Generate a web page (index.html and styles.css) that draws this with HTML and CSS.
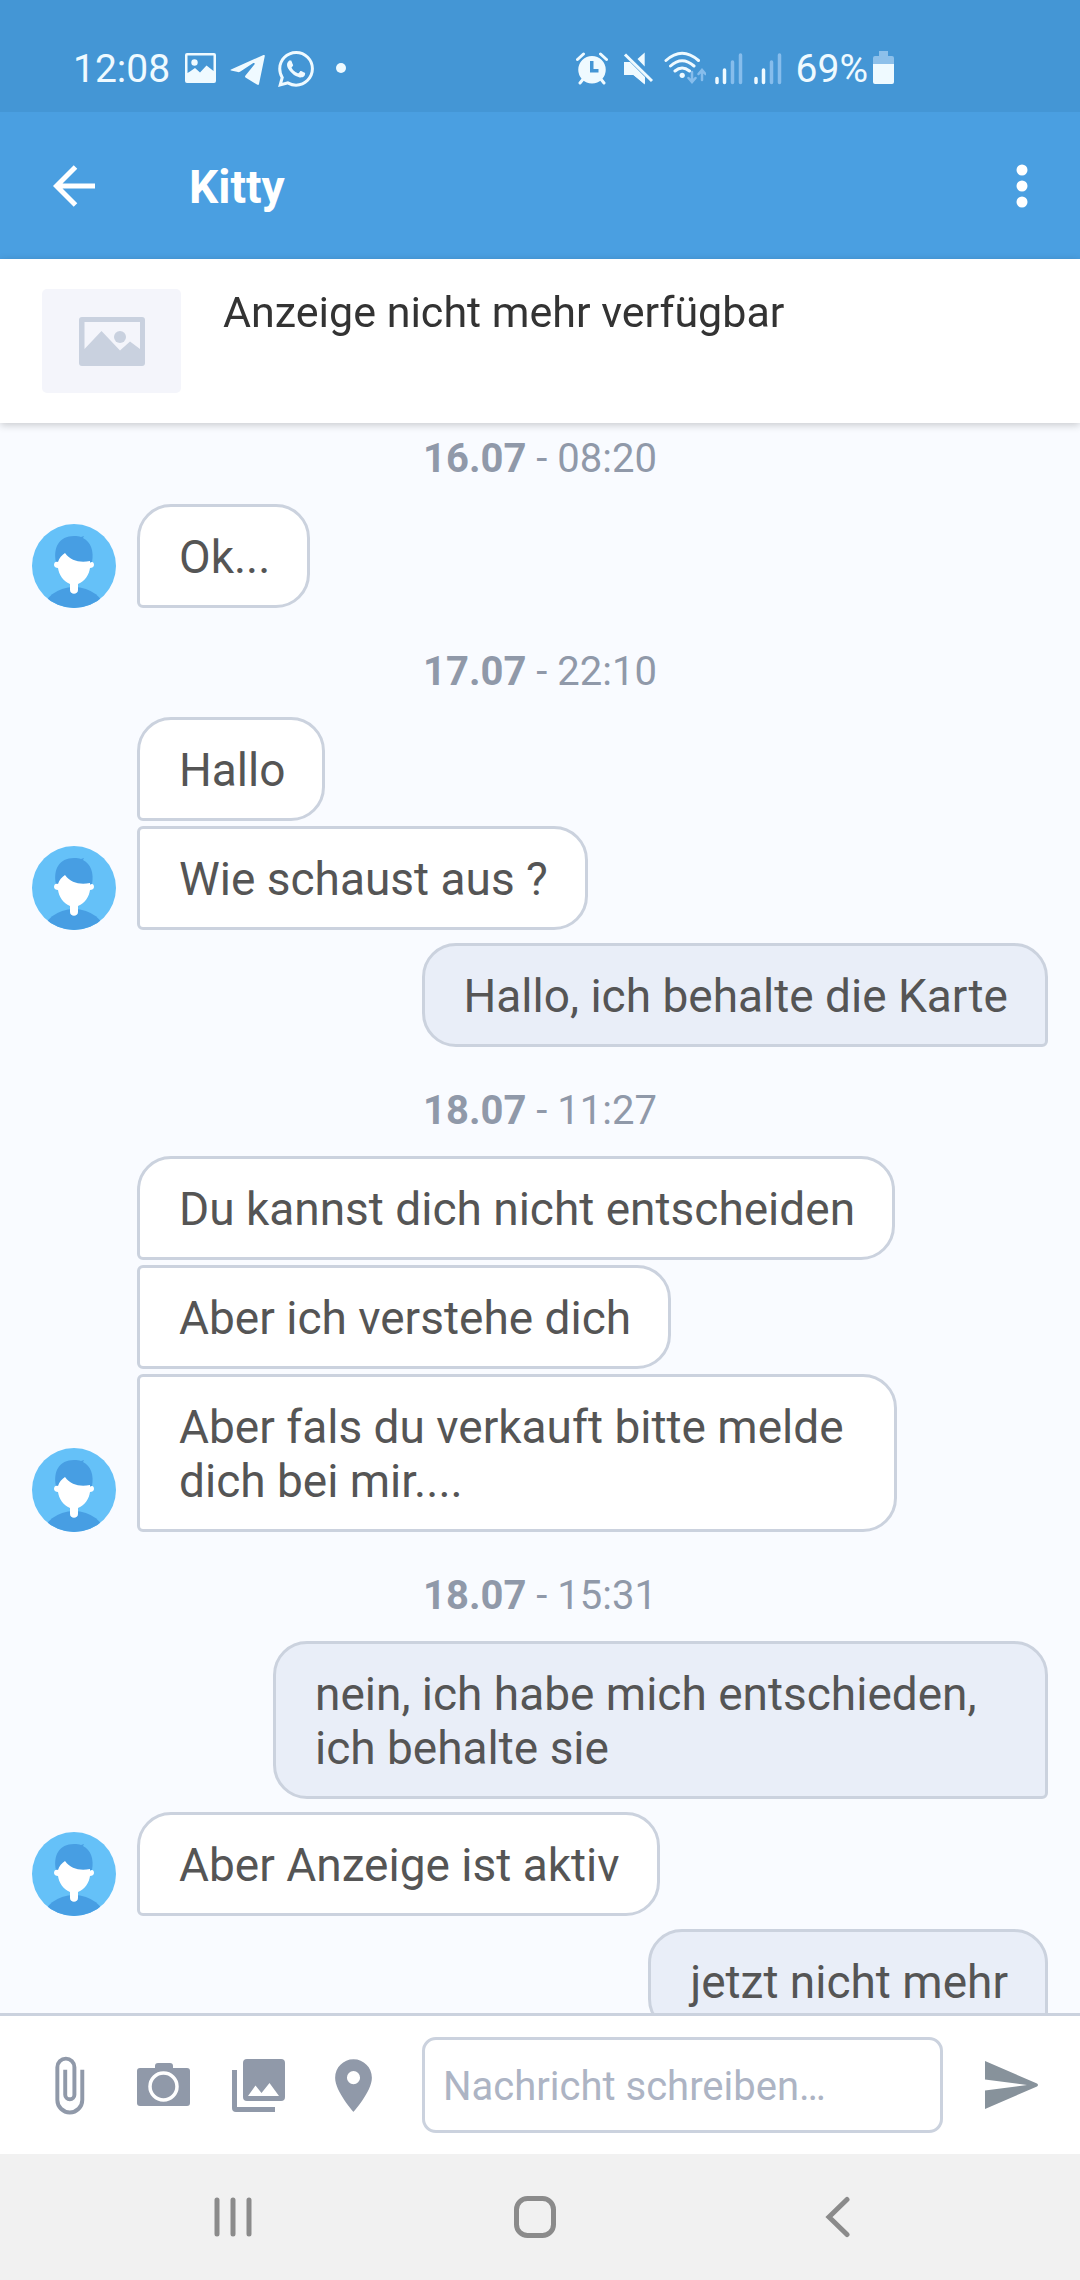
FILE: index.html
```html
<!DOCTYPE html>
<html lang="de">
<head>
<meta charset="utf-8">
<meta name="viewport" content="width=device-width, initial-scale=1">
<title>Kitty</title>
<link rel="stylesheet" href="styles.css">
</head>
<body>
<svg class="symbols" aria-hidden="true">
  <symbol id="avatar" viewBox="0 0 84 84">
    <clipPath id="avatar-clip"><circle cx="42" cy="42" r="42"/></clipPath>
    <circle cx="42" cy="42" r="42" fill="#65c1f8"/>
    <g clip-path="url(#avatar-clip)">
      <ellipse cx="42" cy="88" rx="31" ry="25" fill="#479ee3"/>
      <path d="M24 38C21 24 27 12 42 12c3 0 5 0 7 1l3-1-1 2c8 4 11 13 9 24z" fill="#479ee3"/>
      <path d="M26 38c1-4 4-7 7-9 6 8 15 10 25 8v2c2-2 4-1 4 2 0 2-2 3-4 3-1 7-5 13-12 16v6c0 5-8 5-8 0v-6c-7-3-11-9-12-16-2 0-4-1-4-3 0-3 2-4 4-3z" fill="#fff"/>
    </g>
  </symbol>
</svg>
<div class="app">
  <div class="status-bar">
    <div class="status-left">
      <span>12:08</span>
      <svg width="36" height="36" viewBox="0 0 36 36" fill="currentColor"><path fill-rule="evenodd" d="M5 2h27a2 2 0 0 1 2 2v26a2 2 0 0 1-2 2H5a2 2 0 0 1-2-2V4a2 2 0 0 1 2-2zm.5 2.500V22l2.500-1.500 5-3.500 5 4.500 6.500-7L31.500 20V4.500z"/><circle cx="12.500" cy="11.500" r="3.200"/></svg>
      <svg width="36" height="36" viewBox="0 0 36 36" fill="currentColor"><path d="M1 18.500 33.500 4q1.500-.5 1.300 1L29 33q-.5 1.500-2 .5L15.500 26.500q-1-1 0-2L24.800 13q0-1.500-1.500-1L10 20.800q-1 .6-2 .3L1 19.500q-1-.5 0-1z"/></svg>
      <svg width="36" height="36" viewBox="0 0 24 24" fill="currentColor"><path d="M17.472 14.382c-.297-.149-1.758-.867-2.030-.967-.273-.099-.471-.148-.67.15-.197.297-.767.966-.94 1.164-.173.199-.347.223-.644.075-.297-.15-1.255-.463-2.390-1.475-.883-.788-1.480-1.761-1.653-2.059-.173-.297-.018-.458.13-.606.134-.133.298-.347.446-.52.149-.174.198-.298.298-.497.099-.198.05-.371-.025-.52-.075-.149-.669-1.612-.916-2.207-.242-.579-.487-.5-.669-.51-.173-.008-.371-.01-.57-.01-.198 0-.52.074-.792.372-.272.297-1.040 1.016-1.040 2.479 0 1.462 1.065 2.875 1.213 3.074.149.198 2.096 3.200 5.077 4.487.709.306 1.262.489 1.694.625.712.227 1.360.195 1.871.118.571-.085 1.758-.719 2.006-1.413.248-.694.248-1.289.173-1.413-.074-.124-.272-.198-.57-.347m-5.421 7.403h-.004a9.870 9.870 0 0 1-5.031-1.378l-.361-.214-3.741.982.998-3.648-.235-.374a9.860 9.860 0 0 1-1.510-5.260c.001-5.450 4.436-9.884 9.888-9.884 2.640 0 5.122 1.030 6.988 2.898a9.825 9.825 0 0 1 2.893 6.994c-.003 5.450-4.437 9.884-9.885 9.884m8.413-18.297A11.815 11.815 0 0 0 12.050 0C5.495 0 .16 5.335.157 11.892c0 2.096.547 4.142 1.588 5.945L.057 24l6.305-1.654a11.882 11.882 0 0 0 5.683 1.448h.005c6.554 0 11.890-5.335 11.893-11.893a11.821 11.821 0 0 0-3.480-8.413z"/></svg>
      <svg width="30" height="36" viewBox="0 0 30 36" fill="currentColor"><circle cx="15" cy="17" r="5"/></svg>
    </div>
    <div class="status-right">
      <svg width="36" height="36" viewBox="0 0 36 36" fill="none" stroke="currentColor" stroke-width="4"><path fill="currentColor" stroke="none" fill-rule="evenodd" d="M16 5a13.500 13.500 0 1 1 0 27.500A13.500 13.500 0 1 1 16 5zm-2 5v11.500h8.500V18h-5v-8z"/><path d="m1.500 8.500 6-5.500M24.500 3l6 5.500M4 32l4-5M28 32l-4-5" stroke-linecap="round" stroke-width="3"/></svg>
      <svg width="36" height="36" viewBox="0 0 36 36" fill="currentColor"><path d="M24.700 1.500v14L17.500 8zM4 11h5l15.700 16v6.500L13.500 24H4z"/><path d="M4 11h6l15 15v7L13.500 24H4z"/><path d="m5 3.500 27 26.500" stroke="currentColor" stroke-width="3"/></svg>
      <svg width="42" height="36" viewBox="0 0 42 36" fill="none" stroke="currentColor" stroke-width="3" stroke-linecap="round"><path d="M2 9.500q16-14.500 32.500 0M6.500 15q11.500-10.500 23.500 0M11 20q7-6 14.500 0"/><circle cx="18.200" cy="24.300" r="2.600" fill="currentColor" stroke="none"/><g stroke="#86bdec" stroke-width="2.500"><path d="M28 21v9m-3.500-3 3.500 4 3.500-4M38 29v-9m-3.500 3 3.500-4 3.500 4"/></g></svg>
      <svg width="74" height="36" viewBox="0 0 74 36" stroke-width="3.500" stroke-linecap="round" stroke="currentColor"><path d="M3 27.500v4M10.500 19v12.500M42 27.500v4M49.500 19v12.500"/><path d="M18.500 11v20.500M26.500 4v27.500M57.500 11v20.500M65.500 4v27.500" stroke="#86bdec"/></svg>
      <div class="battery">
        <span>69%</span>
        <svg width="22" height="36" viewBox="0 0 22 36"><path d="M7 0h9v5h4q2 0 2 2v7H1V7q0-2 2-2h4z" fill="#8dc0ea"/><path d="M1 13h21v18q0 2-2 2H3q-2 0-2-2z" fill="currentColor"/></svg>
      </div>
    </div>
  </div>

  <header class="app-bar">
    <button class="icon-button back" aria-label="Zurück"><svg width="42" height="42" viewBox="0 0 42 42" fill="none" stroke="currentColor" stroke-width="5"><path d="M42 21H4M22.500 2 3.500 21l19 19"/></svg></button>
    <h1>Kitty</h1>
    <button class="icon-button more" aria-label="Mehr"><svg width="12" height="44" viewBox="0 0 12 44" fill="currentColor"><circle cx="6" cy="6" r="5.500"/><circle cx="6" cy="22" r="5.500"/><circle cx="6" cy="38" r="5.500"/></svg></button>
  </header>

  <section class="ad">
    <div class="thumb"><svg width="66" height="49" viewBox="0 0 66 49"><rect width="66" height="49" rx="3" fill="#c9d1df"/><path d="M5.500 5h55.500v27l-10-7.500-10 9L22.500 14 5.500 32z" fill="#f4f5fb"/><circle cx="41" cy="20" r="6" fill="#c9d1df"/></svg></div>
    <p>Anzeige nicht mehr verfügbar</p>
  </section>

  <main class="chat">
    <p class="day"><b>16.07</b> - 08:20</p>
    <div class="incoming">
      <svg class="avatar"><use href="#avatar"/></svg>
      <div class="stack"><p class="bubble">Ok...</p></div>
    </div>
    <p class="day"><b>17.07</b> - 22:10</p>
    <div class="incoming">
      <svg class="avatar"><use href="#avatar"/></svg>
      <div class="stack"><p class="bubble">Hallo</p><p class="bubble">Wie schaust aus ?</p></div>
    </div>
    <div class="outgoing"><p class="bubble">Hallo, ich behalte die Karte</p></div>
    <p class="day"><b>18.07</b> - 11:27</p>
    <div class="incoming">
      <svg class="avatar"><use href="#avatar"/></svg>
      <div class="stack"><p class="bubble">Du kannst dich nicht entscheiden</p><p class="bubble">Aber ich verstehe dich</p><p class="bubble">Aber fals du verkauft bitte melde dich bei mir....</p></div>
    </div>
    <p class="day"><b>18.07</b> - 15:31</p>
    <div class="outgoing"><p class="bubble">nein, ich habe mich entschieden, ich behalte sie</p></div>
    <div class="incoming">
      <svg class="avatar"><use href="#avatar"/></svg>
      <div class="stack"><p class="bubble">Aber Anzeige ist aktiv</p></div>
    </div>
    <div class="outgoing"><p class="bubble">jetzt nicht mehr</p></div>
  </main>

  <form class="composer">
    <div class="tools">
      <button type="button" class="icon-button" aria-label="Datei anhängen"><svg width="63" height="63" viewBox="0 0 24 24" fill="currentColor"><path d="M16.500 6v11.500a4 4 0 0 1-8 0V5a2.500 2.500 0 0 1 5 0v10.500a1 1 0 0 1-2 0V6H10v9.500a2.500 2.500 0 0 0 5 0V5a4 4 0 0 0-8 0v12.500a5.500 5.500 0 0 0 11 0V6z"/></svg></button>
      <button type="button" class="icon-button" aria-label="Kamera"><svg width="63" height="63" viewBox="0 0 63 63" fill="currentColor"><rect x="5" y="14" width="53" height="38" rx="3"/><rect x="23" y="9" width="18" height="10" rx="3"/><circle cx="31.500" cy="32.500" r="13.500" stroke="#fff" stroke-width="3.500"/></svg></button>
      <button type="button" class="icon-button" aria-label="Galerie"><svg width="63" height="63" viewBox="0 0 63 63" fill="currentColor"><path d="M5 16h5v37h38v5H9q-4 0-4-4z"/><rect x="16" y="5" width="42" height="42" rx="4"/><path d="m21 42 7.500-10.500 6 7.500 8-10L52 42z" fill="#fff"/></svg></button>
      <button type="button" class="icon-button" aria-label="Standort"><svg width="63" height="63" viewBox="0 0 24 24" fill="currentColor"><path d="M12 2C8.130 2 5 5.130 5 9c0 5.250 7 13 7 13s7-7.750 7-13c0-3.870-3.130-7-7-7zm0 9.500a2.500 2.500 0 0 1 0-5 2.500 2.500 0 0 1 0 5z"/></svg></button>
    </div>
    <input type="text" aria-label="Nachricht" placeholder="Nachricht schreiben…">
    <button type="submit" class="icon-button send" aria-label="Senden"><svg width="54" height="48" viewBox="0 0 54 48" fill="currentColor"><path d="m0 0 52 22.500q2 1.500 0 3L0 48V29.500L42 24 0 18.500z"/></svg></button>
  </form>

  <nav class="system-nav">
    <button class="icon-button" aria-label="Letzte Apps"><svg width="42" height="42" viewBox="0 0 42 42" stroke="currentColor" stroke-width="5" stroke-linecap="round"><path d="M5 4v34M21 4v34M37 4v34"/></svg></button>
    <button class="icon-button" aria-label="Startbildschirm"><svg width="42" height="42" viewBox="0 0 42 42" fill="none" stroke="currentColor" stroke-width="5"><rect x="2.500" y="2.500" width="37" height="37" rx="11"/></svg></button>
    <button class="icon-button" aria-label="Zurück"><svg width="42" height="42" viewBox="0 0 42 42" fill="none" stroke="currentColor" stroke-width="5" stroke-linecap="round"><path d="M31 3.500 13 21l18 17.500"/></svg></button>
  </nav>
</div>
</body>
</html>
```

FILE: styles.css
```css
* {
  box-sizing: border-box;
}

body {
  margin: 0;
  font-family: Roboto, "Noto Sans", sans-serif;
}

p,
h1 {
  margin: 0;
}

svg {
  display: block;
  flex: none;
}

.symbols {
  position: absolute;
  width: 0;
  height: 0;
}

.app {
  display: flex;
  flex-direction: column;
  height: 100vh;
}

.icon-button {
  display: flex;
  align-items: center;
  justify-content: center;
  padding: 0;
  border: 0;
  background: none;
  color: inherit;
}

/* Status bar */
.status-bar {
  display: flex;
  flex: none;
  align-items: center;
  justify-content: space-between;
  height: 112px;
  padding: 26px 186px 0 73px;
  background: #4496d5;
  color: #effaff;
  font-size: 39px;
  line-height: 46px;
}

.status-left {
  display: flex;
  align-items: center;
  gap: 12px;
}

.status-right {
  display: flex;
  align-items: center;
  gap: 8px;
}

.battery {
  display: flex;
  align-items: center;
  gap: 4px;
}

/* Title bar */
.app-bar {
  display: flex;
  flex: none;
  align-items: stretch;
  height: 147px;
  background: #4a9fe1;
  color: #fff;
}

.back {
  width: 147px;
}

.app-bar h1 {
  flex: 1;
  align-self: center;
  padding: 2px 0 0 42px;
  font-size: 46px;
  line-height: 54px;
}

.more {
  width: 116px;
}

/* Listing the chat is about */
.ad {
  position: relative;
  z-index: 1;
  display: flex;
  flex: none;
  gap: 42px;
  padding: 30px 42px;
  background: #fff;
  box-shadow: 0 2px 8px rgba(0, 0, 0, 0.2);
  color: #333;
  font-size: 43px;
  line-height: 46px;
}

.thumb {
  display: flex;
  flex: none;
  align-items: center;
  justify-content: center;
  width: 139px;
  height: 104px;
  border-radius: 5px;
  background: #f4f5fb;
}

/* Messages */
.chat {
  display: flex;
  flex: 1;
  flex-direction: column;
  gap: 13px;
  min-height: 0;
  padding: 12px 32px 13px;
  overflow-y: auto;
  scrollbar-width: none;
  background: #f9fbff;
}

.chat > * {
  flex: none;
}

.day {
  margin-bottom: 8px;
  color: #9099a9;
  font-size: 40px;
  line-height: 48px;
  text-align: center;
}

.day:not(:first-child) {
  margin-top: 27px;
}

.incoming {
  display: flex;
  align-items: flex-end;
  gap: 21px;
  padding-right: 151px;
}

.avatar {
  width: 84px;
  height: 84px;
}

.stack {
  display: flex;
  flex-direction: column;
  align-items: flex-start;
  gap: 5px;
}

.outgoing {
  display: flex;
  justify-content: flex-end;
  padding-left: 241px;
}

.bubble {
  padding: 23px 37px 21px 39px;
  border: 3px solid #cbd2de;
  border-radius: 34px;
  color: #555;
  font-size: 46px;
  line-height: 54px;
}

.incoming .bubble {
  border-bottom-left-radius: 6px;
  background: #fff;
}

.incoming .bubble + .bubble {
  border-top-left-radius: 6px;
}

.outgoing .bubble {
  border-bottom-right-radius: 6px;
  background: #e9eef8;
}

/* Composer */
.composer {
  display: flex;
  flex: none;
  padding: 21px 0 21px 21px;
  border-top: 3px solid #cbd2de;
  background: #fff;
  color: #9099a9;
}

.tools {
  display: flex;
  margin-right: 21px;
}

.tools .icon-button {
  width: 95px;
}

.composer input {
  flex: 1;
  min-width: 0;
  height: 96px;
  padding: 3px 18px 0;
  border: 3px solid #cbd2de;
  border-radius: 14px;
  background: #fff;
  color: #555;
  font: 40px Roboto, "Noto Sans", sans-serif;
}

.composer input::placeholder {
  color: #adb4c4;
}

.send {
  width: 137px;
  color: #87929b;
}

/* System navigation */
.system-nav {
  display: flex;
  flex: none;
  height: 126px;
  padding: 0 92px 0 82px;
  background: #f1f1f1;
  color: #8b8b8b;
}

.system-nav .icon-button {
  flex: 1;
}
```
